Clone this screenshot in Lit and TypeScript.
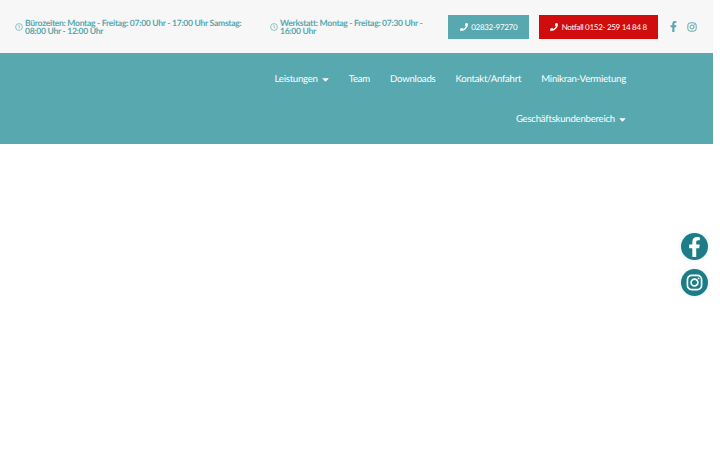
import { LitElement, html, css, svg } from "lit";
import { customElement } from "lit/decorators.js";

const phone = svg`<path fill="currentColor" d="M493.4 24.6l-104-24c-11.3-2.6-22.9 3.3-27.5 13.9l-48 112c-4.2 9.8-1.4 21.3 6.9 28l60.6 49.6c-36 76.7-98.9 140.5-177.2 177.2l-49.6-60.6c-6.8-8.3-18.2-11.1-28-6.9l-112 48C3.9 366.5-2 378.1.6 389.4l24 104C27.1 504.2 36.7 512 48 512c256.1 0 464-207.5 464-464 0-11.2-7.7-20.9-18.6-23.4z"/>`;
const clock = html`<svg class="clock" viewBox="0 0 16 16" fill="none" stroke="currentColor" stroke-width="1.3"><circle cx="8" cy="8" r="6.8"/><path d="M8 4V8.4l2.4 1.6"/></svg>`;
const caret = html`<svg class="caret" viewBox="0 0 10 6"><path d="M0 .3h10L5 5.8z" fill="currentColor"/></svg>`;
const fb = (cls: string) => html`<svg class=${cls} viewBox="0 0 320 512"><path fill="currentColor" d="M279 288l14-93h-89v-60c0-25 12-50 52-50h41V7s-37-7-72-7c-73 0-121 45-121 125v70H23v93h81v224h100V288z"/></svg>`;
const ig = (cls: string) => html`<svg class=${cls} viewBox="0 0 24 24" fill="none" stroke="currentColor" stroke-width="2.4"><rect x="2" y="2" width="20" height="20" rx="6"/><circle cx="12" cy="12" r="4.8"/><circle cx="17.8" cy="6.2" r="1.3" fill="currentColor" stroke="none"/></svg>`;

@customElement("app-root")
export class AppRoot extends LitElement {
  static styles = css`
    :host { display: block; width: 720px; height: 450px; background: #fff; font-family: Lato, "Open Sans", sans-serif; overflow: hidden; position: relative; text-rendering: geometricPrecision; }
    .page { width: 713px; }
    .top { height: 53px; background: #f7f7f7; display: flex; align-items: center; box-sizing: border-box; padding-left: 15px; }
    .info { display: flex; align-items: center; gap: 2px; color: #58a8b0; font-size: 8.6px; font-weight: 700; line-height: 8px; letter-spacing: -0.3px; }
    .info.a { width: 255px; }
    .info.a span { width: 225px; }
    .info.b { width: 178px; }
    .info.b span { width: 150px; }
    .clock { width: 8px; height: 8px; flex: none; }
    .btn { height: 24px; box-sizing: border-box; display: flex; align-items: center; justify-content: center; gap: 3.5px; color: #fff; font-size: 8px; letter-spacing: -0.3px; }
    .btn svg { width: 8px; height: 8px; }
    .call { width: 81px; background: #58a8b0; margin-right: 10px; }
    .sos { width: 119px; background: #d10c0c; }
    .social { display: flex; align-items: center; color: #58a8b0; margin-left: 12px; gap: 10px; }
    .f-small { width: 7px; height: 11px; }
    .i-small { width: 10px; height: 10px; }
    .nav { height: 91px; background: #58a8b0; color: #fff; font-size: 9.6px; letter-spacing: -0.23px; display: flex; flex-direction: column; align-items: flex-end; padding-right: 87px; box-sizing: border-box; }
    .row { height: 40px; display: flex; align-items: center; gap: 20px; }
    .row.one { margin-top: 7px; height: 39px; }
    .row.two { height: 41px; }
    .row span { display: flex; align-items: center; gap: 4px; }
    .caret { width: 7px; height: 4px; }
    .float { position: absolute; left: 681px; width: 27px; height: 27px; border-radius: 50%; background: #1c7d88; color: #fff; display: flex; align-items: center; justify-content: center; box-shadow: 0 0 4px rgba(28, 125, 136, 0.15); }
    .fb { top: 233px; }
    .in { top: 269px; }
    .f-big { width: 13px; height: 20px; }
    .i-big { width: 17px; height: 17px; }
  `;
  render() {
    return html`
      <div class="page">
        <div class="top">
          <div class="info a">${clock}<span>Bürozeiten: Montag - Freitag: 07:00 Uhr - 17:00 Uhr Samstag: 08:00 Uhr - 12:00 Uhr</span></div>
          <div class="info b">${clock}<span>Werkstatt: Montag - Freitag: 07:30 Uhr - 16:00 Uhr</span></div>
          <div class="btn call"><svg viewBox="0 0 512 512">${phone}</svg>02832-97270</div>
          <div class="btn sos"><svg viewBox="0 0 512 512">${phone}</svg>Notfall 0152- 259 14 84 8</div>
          <div class="social">${fb("f-small")}${ig("i-small")}</div>
        </div>
        <div class="nav">
          <div class="row one"><span>Leistungen ${caret}</span><span>Team</span><span>Downloads</span><span>Kontakt/Anfahrt</span><span>Minikran-Vermietung</span></div>
          <div class="row two"><span>Geschäftskundenbereich ${caret}</span></div>
        </div>
      </div>
      <div class="float fb">${fb("f-big")}</div>
      <div class="float in">${ig("i-big")}</div>
    `;
  }
}
